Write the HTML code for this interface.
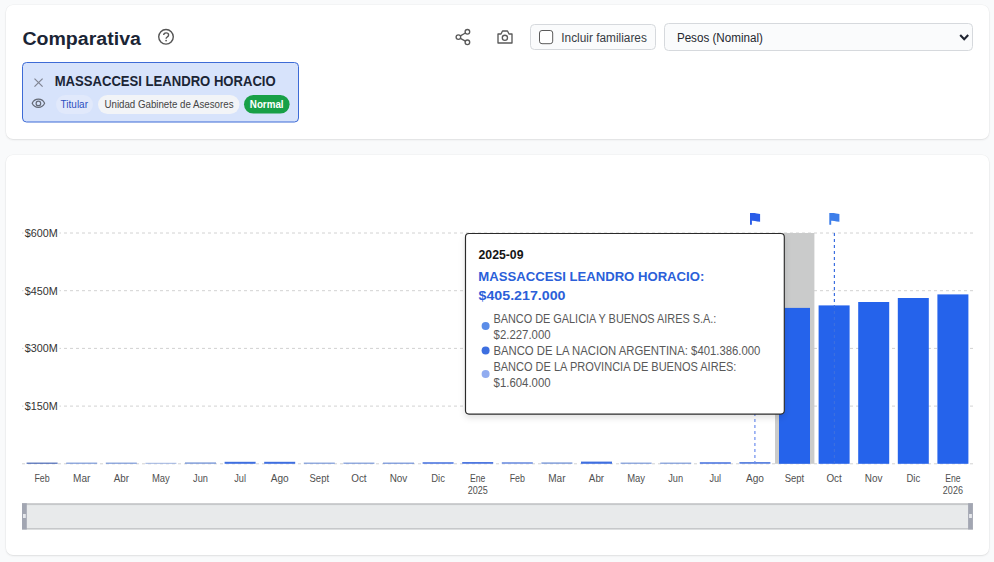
<!DOCTYPE html>
<html><head><meta charset="utf-8"><style>
html,body{margin:0;padding:0;}
body{width:994px;height:562px;background:#f9fafb;position:relative;overflow:hidden;font-family:"Liberation Sans",sans-serif;}
.card{position:absolute;background:#fff;border-radius:7px;box-shadow:0 1px 2px rgba(0,0,0,0.09),0 0 0 0.5px rgba(0,0,0,0.04);}
svg{position:absolute;left:0;top:0;}
svg text{font-family:"Liberation Sans",sans-serif;}
</style></head><body>
<div class="card" style="left:6px;top:5px;width:983px;height:134px"></div>
<div class="card" style="left:6px;top:155px;width:983px;height:400px"></div>
<svg width="994" height="562" viewBox="0 0 994 562">
<defs><filter id="sh" x="-10%" y="-10%" width="120%" height="125%"><feDropShadow dx="0" dy="3" stdDeviation="3" flood-color="#000" flood-opacity="0.12"/></filter></defs>
<text x="22.4" y="44.7" font-size="19.2" fill="#1b2535" font-weight="bold" text-anchor="start" textLength="118.5" lengthAdjust="spacingAndGlyphs">Comparativa</text>
<circle cx="166" cy="36.8" r="7.3" fill="none" stroke="#555" stroke-width="1.4"/>
<path d="M163.7 35.1 Q163.7 32.9 166.1 32.9 Q168.6 32.9 168.6 35 Q168.6 36.3 167.2 37 Q166.1 37.6 166.1 38.8" fill="none" stroke="#555" stroke-width="1.4"/>
<circle cx="166.1" cy="40.6" r="0.85" fill="#555"/>
<rect x="22.5" y="62.5" width="276" height="59.5" rx="4" fill="#d7e3fb" stroke="#3d6bd6" stroke-width="1"/>
<path d="M34.5 78.6 L42.6 86.7 M42.6 78.6 L34.5 86.7" stroke="#7f8492" stroke-width="1.2"/>
<text x="54.7" y="85.7" font-size="14" fill="#1b2535" font-weight="bold" text-anchor="start" textLength="221" lengthAdjust="spacingAndGlyphs">MASSACCESI LEANDRO HORACIO</text>
<path d="M32.2 103.3 C34.7 97.8 42.1 97.8 44.6 103.3 C42.1 108.8 34.7 108.8 32.2 103.3 Z" fill="none" stroke="#646a76" stroke-width="1.2"/>
<circle cx="38.4" cy="103.4" r="2.3" fill="none" stroke="#646a76" stroke-width="1.2"/>
<rect x="56" y="95" width="37" height="19" rx="9.5" fill="#e1e9fb"/>
<text x="60.6" y="107.8" font-size="10.2" fill="#2c4fbf" font-weight="normal" text-anchor="start" textLength="27.4" lengthAdjust="spacingAndGlyphs">Titular</text>
<rect x="98" y="95" width="141.5" height="19" rx="9.5" fill="#f2f4f7"/>
<text x="104.5" y="107.8" font-size="10.2" fill="#444" font-weight="normal" text-anchor="start" textLength="129" lengthAdjust="spacingAndGlyphs">Unidad Gabinete de Asesores</text>
<rect x="244" y="95" width="45.6" height="18.6" rx="9.3" fill="#18a047"/>
<text x="249.8" y="107.8" font-size="10.4" fill="#fff" font-weight="bold" text-anchor="start" textLength="33.8" lengthAdjust="spacingAndGlyphs">Normal</text>
<g fill="none" stroke="#5a5a5a" stroke-width="1.35"><circle cx="458.4" cy="37.1" r="2.3"/><circle cx="467.4" cy="31.8" r="2.3"/><circle cx="467.4" cy="42.3" r="2.3"/><path d="M460.4 35.9 L465.4 33 M460.4 38.3 L465.4 41.1"/></g>
<g fill="none" stroke="#5a5a5a" stroke-width="1.35" stroke-linejoin="round"><path d="M498 34 L501 34 L502.5 31 L507.5 31 L509 34 L512 34 L512 43 L498 43 Z"/><circle cx="504.9" cy="37.8" r="2.6"/></g>
<rect x="530.5" y="24.5" width="125" height="25" rx="4" fill="#fafbfc" stroke="#d6d9dd"/>
<rect x="539.5" y="30.5" width="13.2" height="13.2" rx="2.5" fill="#fff" stroke="#5a5a5a" stroke-width="1"/>
<text x="561.3" y="42.1" font-size="12" fill="#383c44" font-weight="normal" text-anchor="start" textLength="85.6" lengthAdjust="spacingAndGlyphs">Incluir familiares</text>
<rect x="664.5" y="23.5" width="308" height="27" rx="4" fill="#fafbfc" stroke="#d6d9dd"/>
<text x="676.9" y="41.7" font-size="12.3" fill="#252830" font-weight="normal" text-anchor="start" textLength="86" lengthAdjust="spacingAndGlyphs">Pesos (Nominal)</text>
<path d="M960.2 35 L964.2 39.2 L968.2 35" fill="none" stroke="#1f2430" stroke-width="2.1"/>
<line x1="22" y1="233.0" x2="973" y2="233.0" stroke="#d2d2d2" stroke-width="1" stroke-dasharray="3 3"/>
<line x1="22" y1="290.7" x2="973" y2="290.7" stroke="#d2d2d2" stroke-width="1" stroke-dasharray="3 3"/>
<line x1="22" y1="348.4" x2="973" y2="348.4" stroke="#d2d2d2" stroke-width="1" stroke-dasharray="3 3"/>
<line x1="22" y1="406.1" x2="973" y2="406.1" stroke="#d2d2d2" stroke-width="1" stroke-dasharray="3 3"/>
<line x1="22" y1="463.8" x2="973" y2="463.8" stroke="#d2d2d2" stroke-width="1" stroke-dasharray="3 3"/>
<rect x="23.5" y="227.9" width="36" height="12" fill="#fff"/>
<text x="24.8" y="236.9" font-size="10.5" fill="#333" font-weight="normal" text-anchor="start" textLength="33" lengthAdjust="spacingAndGlyphs">$600M</text>
<rect x="23.5" y="285.6" width="36" height="12" fill="#fff"/>
<text x="24.8" y="294.6" font-size="10.5" fill="#333" font-weight="normal" text-anchor="start" textLength="33" lengthAdjust="spacingAndGlyphs">$450M</text>
<rect x="23.5" y="343.3" width="36" height="12" fill="#fff"/>
<text x="24.8" y="352.3" font-size="10.5" fill="#333" font-weight="normal" text-anchor="start" textLength="33" lengthAdjust="spacingAndGlyphs">$300M</text>
<rect x="23.5" y="401" width="36" height="12" fill="#fff"/>
<text x="24.8" y="410" font-size="10.5" fill="#333" font-weight="normal" text-anchor="start" textLength="33" lengthAdjust="spacingAndGlyphs">$150M</text>
<rect x="775" y="233" width="39.4" height="230.8" fill="#cacbcb"/>
<rect x="26.6" y="462.6" width="31" height="1.2" fill="#4a68b5"/>
<rect x="66.2" y="462.6" width="31" height="1.2" fill="#7b98d8"/>
<rect x="105.8" y="462.6" width="31" height="1.2" fill="#7b98d8"/>
<rect x="145.4" y="462.8" width="31" height="1.0" fill="#9fb3e0"/>
<rect x="185.0" y="462.4" width="31" height="1.4" fill="#7b98d8"/>
<rect x="224.6" y="461.8" width="31" height="2.0" fill="#3f6fe0"/>
<rect x="264.2" y="461.8" width="31" height="2.0" fill="#3f6fe0"/>
<rect x="303.8" y="462.6" width="31" height="1.2" fill="#7b98d8"/>
<rect x="343.4" y="462.6" width="31" height="1.2" fill="#7b98d8"/>
<rect x="383.0" y="462.6" width="31" height="1.2" fill="#6f8fd8"/>
<rect x="422.6" y="462.2" width="31" height="1.6" fill="#4f78e0"/>
<rect x="462.2" y="462.0" width="31" height="1.8" fill="#4f78e0"/>
<rect x="501.8" y="462.2" width="31" height="1.6" fill="#6f8fe0"/>
<rect x="541.4" y="462.4" width="31" height="1.4" fill="#7b98d8"/>
<rect x="581.0" y="461.6" width="31" height="2.2" fill="#3f6fe0"/>
<rect x="620.6" y="462.6" width="31" height="1.2" fill="#7b98d8"/>
<rect x="660.2" y="462.6" width="31" height="1.2" fill="#7b98d8"/>
<rect x="699.8" y="462.2" width="31" height="1.6" fill="#4f78e0"/>
<rect x="739.4" y="462.0" width="31" height="1.8" fill="#5f85e0"/>
<rect x="779.0" y="307.9" width="31" height="155.9" fill="#2563eb"/>
<rect x="818.6" y="305.4" width="31" height="158.4" fill="#2563eb"/>
<rect x="858.2" y="302.0" width="31" height="161.8" fill="#2563eb"/>
<rect x="897.8" y="298.0" width="31" height="165.8" fill="#2563eb"/>
<rect x="937.4" y="294.4" width="31" height="169.4" fill="#2563eb"/>
<line x1="754.9" y1="233" x2="754.9" y2="463.8" stroke="#6d8eee" stroke-width="1.2" stroke-dasharray="3 3"/>
<line x1="834.4" y1="233" x2="834.4" y2="463.8" stroke="#3b6fe0" stroke-width="1.2" stroke-dasharray="3 3"/>
<path d="M750.0 213 L754.5 213 Q756.5 213.4 760.1 214.1 L760.1 221.8 Q757.0 221.5 755.0 220.9 Q753.5 220.6 751.9 220.7 L751.9 224.7 L750.0 224.7 Z" fill="#2a5de8"/>
<path d="M829.3 213 L833.8 213 Q835.8 213.4 839.4 214.1 L839.4 221.8 Q836.3 221.5 834.3 220.9 Q832.8 220.6 831.1999999999999 220.7 L831.1999999999999 224.7 L829.3 224.7 Z" fill="#3d7eea"/>
<text x="42.1" y="481.8" font-size="10.6" fill="#505050" font-weight="normal" text-anchor="middle" textLength="15.3" lengthAdjust="spacingAndGlyphs">Feb</text>
<text x="81.7" y="481.8" font-size="10.6" fill="#505050" font-weight="normal" text-anchor="middle" textLength="17.3" lengthAdjust="spacingAndGlyphs">Mar</text>
<text x="121.3" y="481.8" font-size="10.6" fill="#505050" font-weight="normal" text-anchor="middle" textLength="15.3" lengthAdjust="spacingAndGlyphs">Abr</text>
<text x="160.9" y="481.8" font-size="10.6" fill="#505050" font-weight="normal" text-anchor="middle" textLength="17.9" lengthAdjust="spacingAndGlyphs">May</text>
<text x="200.5" y="481.8" font-size="10.6" fill="#505050" font-weight="normal" text-anchor="middle" textLength="14.9" lengthAdjust="spacingAndGlyphs">Jun</text>
<text x="240.1" y="481.8" font-size="10.6" fill="#505050" font-weight="normal" text-anchor="middle" textLength="11.7" lengthAdjust="spacingAndGlyphs">Jul</text>
<text x="279.7" y="481.8" font-size="10.6" fill="#505050" font-weight="normal" text-anchor="middle" textLength="18.0" lengthAdjust="spacingAndGlyphs">Ago</text>
<text x="319.3" y="481.8" font-size="10.6" fill="#505050" font-weight="normal" text-anchor="middle" textLength="19.5" lengthAdjust="spacingAndGlyphs">Sept</text>
<text x="358.9" y="481.8" font-size="10.6" fill="#505050" font-weight="normal" text-anchor="middle" textLength="15.4" lengthAdjust="spacingAndGlyphs">Oct</text>
<text x="398.5" y="481.8" font-size="10.6" fill="#505050" font-weight="normal" text-anchor="middle" textLength="17.7" lengthAdjust="spacingAndGlyphs">Nov</text>
<text x="438.1" y="481.8" font-size="10.6" fill="#505050" font-weight="normal" text-anchor="middle" textLength="13.7" lengthAdjust="spacingAndGlyphs">Dic</text>
<text x="477.7" y="481.8" font-size="10.6" fill="#505050" font-weight="normal" text-anchor="middle" textLength="15.4" lengthAdjust="spacingAndGlyphs">Ene</text>
<text x="477.7" y="493.9" font-size="10.6" fill="#505050" font-weight="normal" text-anchor="middle" textLength="20.1" lengthAdjust="spacingAndGlyphs">2025</text>
<text x="517.3" y="481.8" font-size="10.6" fill="#505050" font-weight="normal" text-anchor="middle" textLength="15.3" lengthAdjust="spacingAndGlyphs">Feb</text>
<text x="556.9" y="481.8" font-size="10.6" fill="#505050" font-weight="normal" text-anchor="middle" textLength="17.3" lengthAdjust="spacingAndGlyphs">Mar</text>
<text x="596.5" y="481.8" font-size="10.6" fill="#505050" font-weight="normal" text-anchor="middle" textLength="15.3" lengthAdjust="spacingAndGlyphs">Abr</text>
<text x="636.1" y="481.8" font-size="10.6" fill="#505050" font-weight="normal" text-anchor="middle" textLength="17.9" lengthAdjust="spacingAndGlyphs">May</text>
<text x="675.7" y="481.8" font-size="10.6" fill="#505050" font-weight="normal" text-anchor="middle" textLength="14.9" lengthAdjust="spacingAndGlyphs">Jun</text>
<text x="715.3" y="481.8" font-size="10.6" fill="#505050" font-weight="normal" text-anchor="middle" textLength="11.7" lengthAdjust="spacingAndGlyphs">Jul</text>
<text x="754.9" y="481.8" font-size="10.6" fill="#505050" font-weight="normal" text-anchor="middle" textLength="18.0" lengthAdjust="spacingAndGlyphs">Ago</text>
<text x="794.5" y="481.8" font-size="10.6" fill="#505050" font-weight="normal" text-anchor="middle" textLength="19.5" lengthAdjust="spacingAndGlyphs">Sept</text>
<text x="834.1" y="481.8" font-size="10.6" fill="#505050" font-weight="normal" text-anchor="middle" textLength="15.4" lengthAdjust="spacingAndGlyphs">Oct</text>
<text x="873.7" y="481.8" font-size="10.6" fill="#505050" font-weight="normal" text-anchor="middle" textLength="17.7" lengthAdjust="spacingAndGlyphs">Nov</text>
<text x="913.3" y="481.8" font-size="10.6" fill="#505050" font-weight="normal" text-anchor="middle" textLength="13.7" lengthAdjust="spacingAndGlyphs">Dic</text>
<text x="952.9" y="481.8" font-size="10.6" fill="#505050" font-weight="normal" text-anchor="middle" textLength="15.4" lengthAdjust="spacingAndGlyphs">Ene</text>
<text x="952.9" y="493.9" font-size="10.6" fill="#505050" font-weight="normal" text-anchor="middle" textLength="20.1" lengthAdjust="spacingAndGlyphs">2026</text>
<rect x="22" y="503.2" width="951" height="26.3" fill="#e8eaeb"/>
<rect x="22" y="503.2" width="951" height="1.9" fill="#c6c8ca"/>
<rect x="22" y="528" width="951" height="1.5" fill="#c6c8ca"/>
<rect x="22" y="503.2" width="4.8" height="26.3" fill="#a2a6b2"/><rect x="23" y="514" width="2.8" height="4" fill="#e6e8ec"/>
<rect x="968.1" y="503.2" width="4.8" height="26.3" fill="#a2a6b2"/><rect x="969.1" y="514" width="2.8" height="4" fill="#e6e8ec"/>
<rect x="465.5" y="233.5" width="318.8" height="180.6" rx="3.5" fill="#fff" stroke="#2c2c2c" stroke-width="1.15" filter="url(#sh)"/>
<text x="478.5" y="258.6" font-size="12" fill="#151515" font-weight="bold" text-anchor="start" textLength="45" lengthAdjust="spacingAndGlyphs">2025-09</text>
<text x="478.3" y="280.8" font-size="13.3" fill="#2b5fd9" font-weight="bold" text-anchor="start" textLength="226" lengthAdjust="spacingAndGlyphs">MASSACCESI LEANDRO HORACIO:</text>
<text x="478.5" y="300.4" font-size="13" fill="#2b5fd9" font-weight="bold" text-anchor="start" textLength="87" lengthAdjust="spacingAndGlyphs">$405.217.000</text>
<circle cx="485.6" cy="325.9" r="4" fill="#5b8de8"/>
<circle cx="485.6" cy="350.4" r="4" fill="#3d6fe0"/>
<circle cx="485.6" cy="373.9" r="4" fill="#91acf0"/>
<text x="493.4" y="322.9" font-size="12" fill="#585858" font-weight="normal" text-anchor="start" textLength="223" lengthAdjust="spacingAndGlyphs">BANCO DE GALICIA Y BUENOS AIRES S.A.:</text>
<text x="493.6" y="338.7" font-size="12" fill="#585858" font-weight="normal" text-anchor="start" textLength="57" lengthAdjust="spacingAndGlyphs">$2.227.000</text>
<text x="493.4" y="354.6" font-size="12" fill="#585858" font-weight="normal" text-anchor="start" textLength="267" lengthAdjust="spacingAndGlyphs">BANCO DE LA NACION ARGENTINA: $401.386.000</text>
<text x="493.4" y="370.6" font-size="12" fill="#585858" font-weight="normal" text-anchor="start" textLength="243" lengthAdjust="spacingAndGlyphs">BANCO DE LA PROVINCIA DE BUENOS AIRES:</text>
<text x="493.6" y="386.5" font-size="12" fill="#585858" font-weight="normal" text-anchor="start" textLength="57" lengthAdjust="spacingAndGlyphs">$1.604.000</text>
</svg>
</body></html>
